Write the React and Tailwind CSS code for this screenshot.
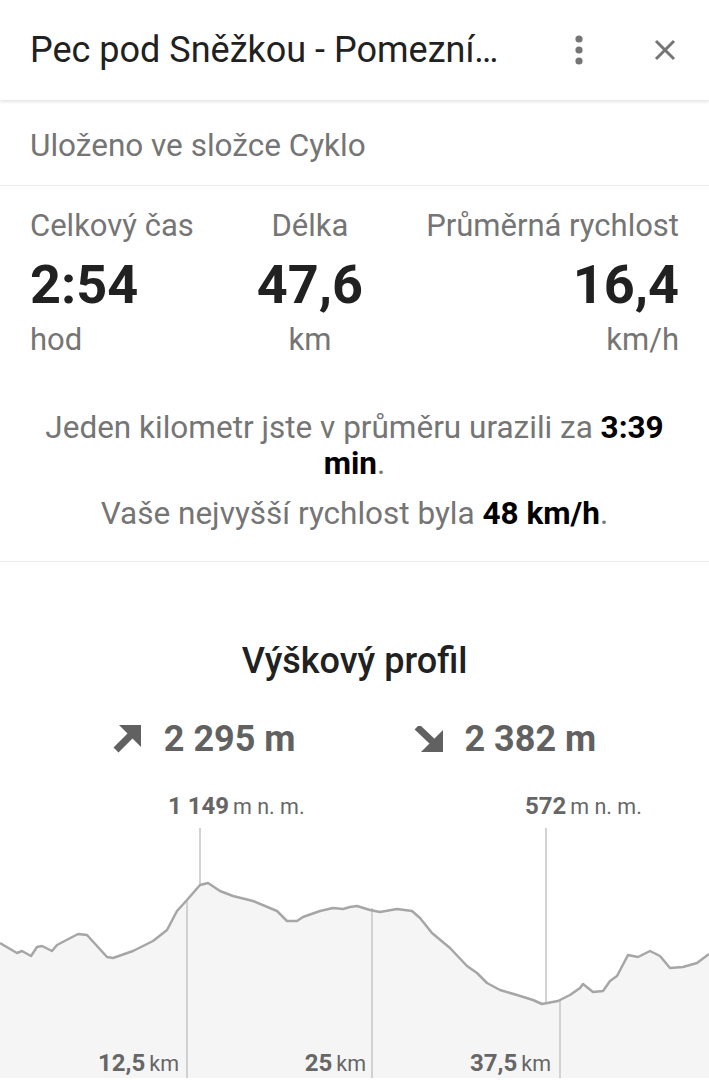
import React from 'react';

const profile = [
  [0, 155], [17, 165], [22, 163], [31, 168], [37, 159], [42, 158], [52, 163], [57, 157],
  [78, 146], [87, 147], [107, 169], [113, 170], [133, 163], [153, 153], [167, 142], [177, 123],
  [187, 112], [200, 97], [208, 95], [220, 103], [233, 108], [253, 113], [277, 123], [287, 133],
  [297, 133], [303, 129], [320, 123], [333, 120], [343, 121], [350, 119], [357, 118], [370, 122],
  [380, 124], [397, 121], [412, 123], [420, 130], [432, 145], [450, 160], [467, 178], [477, 185],
  [487, 195], [500, 202], [517, 207], [533, 212], [542, 216], [558, 213], [570, 207], [580, 200],
  [583, 196], [593, 204], [603, 203], [610, 193], [617, 188], [628, 167], [638, 169], [650, 163],
  [660, 168], [670, 180], [683, 179], [697, 175], [709, 166],
];

const line = profile.map(([x, y], i) => `${i ? 'L' : 'M'}${x} ${y}`).join(' ');
const area = `${line} L709 290 L0 290 Z`;

const Stat = ({ label, value, unit, align }) => (
  <div className={`flex flex-col ${align}`}>
    <p className="text-[31px] leading-[36px] text-[#757575]">{label}</p>
    <p className="mt-[11px] text-[54px] leading-[60px] font-bold text-[#212121]">{value}</p>
    <p className="mt-[7px] text-[31px] leading-[36px] text-[#757575]">{unit}</p>
  </div>
);

const UpArrow = () => (
  <svg width="28" height="29" viewBox="0 0 28 29">
    <polygon points="28,0 28,22 6,0" fill="#616161" />
    <line x1="20" y1="8" x2="3" y2="25" stroke="#616161" strokeWidth="7" />
  </svg>
);

const DownArrow = () => (
  <svg width="29" height="26" viewBox="0 0 29 26">
    <polygon points="29,26 7,26 29,4" fill="#616161" />
    <line x1="21" y1="18" x2="3" y2="1" stroke="#616161" strokeWidth="7" />
  </svg>
);

const ChartLabel = ({ value, unit, className }) => (
  <p className={`absolute whitespace-nowrap text-[#666] leading-[28px] ${className}`}>
    <span className="text-[24px] font-bold">{value}</span> <span className="text-[21.5px]">{unit}</span>
  </p>
);

export default function App() {
  return (
    <div className="w-[709px] h-[1080px] overflow-hidden bg-white font-['Roboto',sans-serif]">
      <div className="relative z-10 h-[100px] flex items-center px-[30px] shadow-[0_2px_3px_rgba(0,0,0,0.1)]">
        <p className="flex-1 text-[36px] text-[#212121] leading-none">Pec pod Sněžkou - Pomezní…</p>
        <svg width="10" height="30" viewBox="0 0 10 30" className="mr-[70px]">
          <circle cx="5" cy="4" r="3.6" fill="#757575" />
          <circle cx="5" cy="15" r="3.6" fill="#757575" />
          <circle cx="5" cy="26" r="3.6" fill="#757575" />
        </svg>
        <svg width="22" height="22" viewBox="0 0 22 22" className="mr-[3px]">
          <path d="M2 2 L20 20 M20 2 L2 20" stroke="#757575" strokeWidth="3" />
        </svg>
      </div>

      <div className="h-[86px] flex items-center pt-[6px] px-[30px] border-b border-[#ececec]">
        <p className="text-[31.5px] text-[#757575]">Uloženo ve složce Cyklo</p>
      </div>

      <div className="px-[30px] pt-[22px] pb-[29px] border-b border-[#ececec]">
        <div className="flex justify-between">
          <Stat label="Celkový čas" value="2:54" unit="hod" align="items-start" />
          <Stat label="Délka" value="47,6" unit="km" align="items-center" />
          <Stat label="Průměrná rychlost" value="16,4" unit="km/h" align="items-end" />
        </div>
        <p className="mt-[52px] text-center text-[31.5px] leading-[36px] text-[#757575]">
          Jeden kilometr jste v průměru urazili za <b className="text-black">3:39 min</b>.
        </p>
        <p className="mt-[14px] text-center text-[31.5px] leading-[36px] text-[#757575]">
          Vaše nejvyšší rychlost byla <b className="text-black">48 km/h</b>.
        </p>
      </div>

      <div className="pt-[79px]">
        <p className="text-center text-[36px] leading-[40px] font-medium text-[#212121]">Výškový profil</p>
        <div className="mt-[38px] flex justify-center gap-[118px] text-[#616161]">
          <div className="flex items-center gap-[23px]">
            <UpArrow />
            <span className="text-[36px] leading-[40px] font-bold">2 295 m</span>
          </div>
          <div className="flex items-center gap-[22px]">
            <DownArrow />
            <span className="text-[36px] leading-[40px] font-bold">2 382 m</span>
          </div>
        </div>

        <div className="relative mt-[29px] h-[290px]">
          <svg width="709" height="290" viewBox="0 0 709 290" className="absolute inset-0">
            <path d={area} fill="#f5f5f5" />
            <g stroke="#c4c4c4" strokeWidth="1.5">
              <line x1="200" y1="40" x2="200" y2="96" />
              <line x1="546" y1="40" x2="546" y2="214" />
              <line x1="187" y1="112" x2="187" y2="290" />
              <line x1="372" y1="120" x2="372" y2="290" />
              <line x1="560" y1="213" x2="560" y2="290" />
            </g>
            <path d={line} fill="none" stroke="#a6a6a6" strokeWidth="2.5" strokeLinejoin="round" />
          </svg>
          <ChartLabel value="1 149" unit="m n. m." className="left-[168px] top-[4px]" />
          <ChartLabel value="572" unit="m n. m." className="left-[525px] top-[4px]" />
          <ChartLabel value="12,5" unit="km" className="right-[530px] top-[261px]" />
          <ChartLabel value="25" unit="km" className="right-[343px] top-[261px]" />
          <ChartLabel value="37,5" unit="km" className="right-[158px] top-[261px]" />
        </div>
      </div>
    </div>
  );
}
